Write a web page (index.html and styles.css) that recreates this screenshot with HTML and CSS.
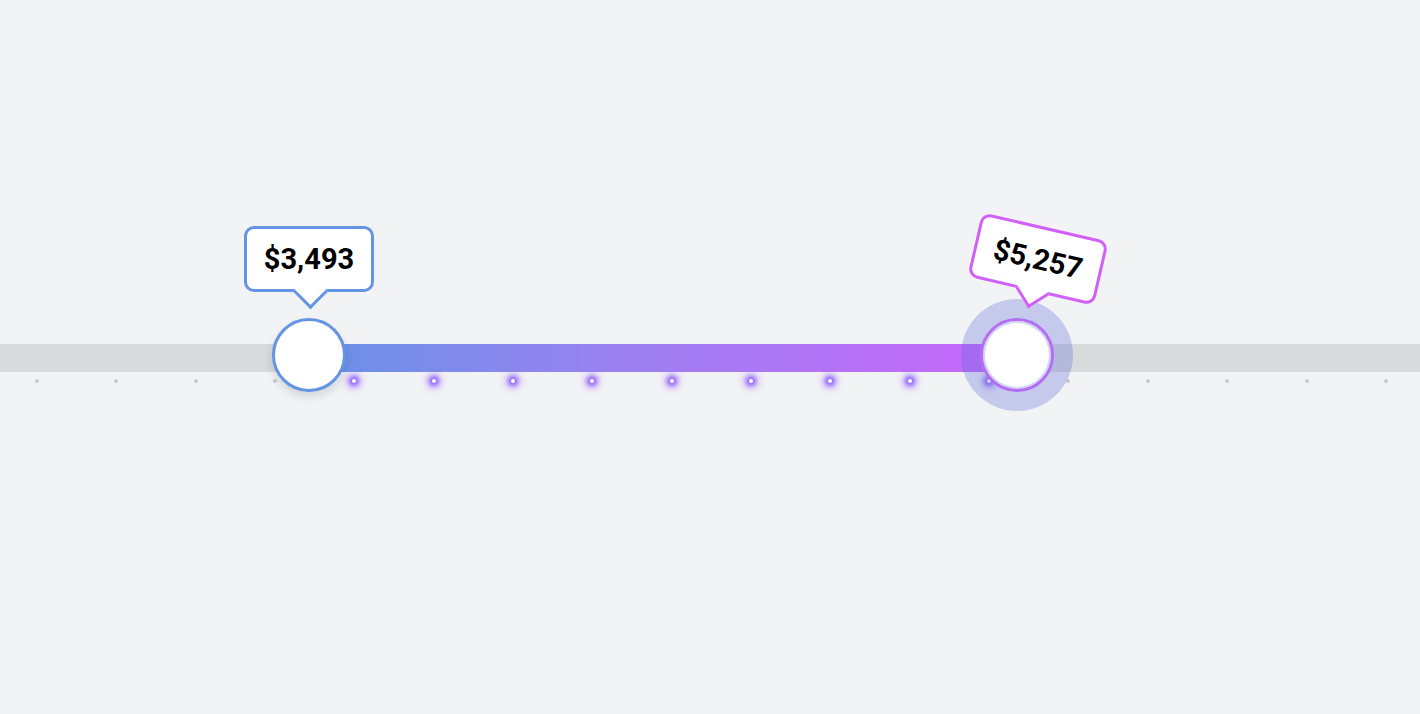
FILE: index.html
```html
<!DOCTYPE html>
<html lang="en">
<head>
    <meta charset="UTF-8">
    <meta name="viewport" content="width=device-width, initial-scale=1.0">
    <title>Price range</title>
    <link rel="stylesheet" href="styles.css">
</head>
<body>
    <div class="slider">
        <div class="track">
            <div class="range"></div>

            <!-- Pulgar izquierdo -->
            <div class="thumb-wrap min">
                <div class="bubble"><span>$3,493</span></div>
                <div class="thumb"></div>
            </div>

            <!-- Pulgar derecho (activo) -->
            <div class="thumb-wrap max">
                <div class="halo"></div>
                <div class="bubble tilted"><span>$5,257</span></div>
                <div class="thumb"></div>
            </div>
        </div>

        <div class="ticks">
            <span class="tick"></span>
            <span class="tick"></span>
            <span class="tick"></span>
            <span class="tick"></span>
            <span class="tick on"></span>
            <span class="tick on"></span>
            <span class="tick on"></span>
            <span class="tick on"></span>
            <span class="tick on"></span>
            <span class="tick on"></span>
            <span class="tick on"></span>
            <span class="tick on"></span>
            <span class="tick on"></span>
            <span class="tick"></span>
            <span class="tick"></span>
            <span class="tick"></span>
            <span class="tick"></span>
            <span class="tick"></span>
        </div>
    </div>
</body>
</html>
```

FILE: styles.css
```css
* {
    margin: 0;
    padding: 0;
    box-sizing: border-box;
}

body {
    display: flex;
    flex-direction: column;
    justify-content: center;
    height: 100vh;
    background: #f2f3f5;
    font-family: Roboto, 'Liberation Sans', sans-serif;
}

.slider {
    padding-top: 13px;
}

.track {
    position: relative;
    height: 28px;
    background: #d9dadb;
}

.range {
    position: absolute;
    left: 309px;
    width: 708px;
    height: 100%;
    background: linear-gradient(90deg, #6892e6, #9c80f0 45%, #c866fb);
}

.thumb-wrap {
    position: absolute;
    top: -26px;
    width: 74px;
    height: 74px;
}

.thumb-wrap.min {
    left: 272px;
}

.thumb-wrap.max {
    left: 980px;
}

.thumb {
    position: relative;
    width: 74px;
    height: 74px;
    border-radius: 50%;
    background: #fff;
    border: 3px solid #6494e4;
    box-shadow: 0 5px 10px rgba(0, 0, 0, 0.12);
}

.max .thumb {
    border-color: #b46ef2;
    box-shadow: inset 0 0 0 2px #d2d6f6;
}

.halo {
    position: absolute;
    left: -19px;
    top: -19px;
    width: 112px;
    height: 112px;
    border-radius: 50%;
    background: rgba(92, 110, 218, 0.3);
}

.bubble {
    position: absolute;
    left: -28px;
    bottom: 100px;
    width: 130px;
    height: 66px;
    display: flex;
    align-items: center;
    justify-content: center;
    background: #fff;
    border: 3px solid #6494e4;
    border-radius: 10px;
    font-size: 29px;
    font-weight: 700;
    color: #000;
}

.bubble span {
    position: relative;
    z-index: 1;
}

/* Flecha del globo */
.bubble::after {
    content: '';
    position: absolute;
    left: 51px;
    bottom: -15px;
    width: 22px;
    height: 22px;
    background: #fff;
    border-right: 3px solid #6494e4;
    border-bottom: 3px solid #6494e4;
    transform: rotate(45deg);
}

.bubble.tilted {
    border-color: #d060f8;
    transform: translateX(21px) rotate(13deg);
}

.bubble.tilted::after {
    border-color: #d060f8;
}

.ticks {
    display: flex;
    justify-content: space-between;
    height: 4px;
    margin-top: 7px;
    padding: 0 32px 0 35px;
}

.tick {
    width: 4px;
    height: 4px;
    border-radius: 50%;
    background: #c9cacc;
}

.tick.on {
    background: #fff;
    box-shadow: 0 0 5px 3px rgba(122, 60, 255, 0.85), 0 0 10px 5px rgba(122, 60, 255, 0.3);
}
```
